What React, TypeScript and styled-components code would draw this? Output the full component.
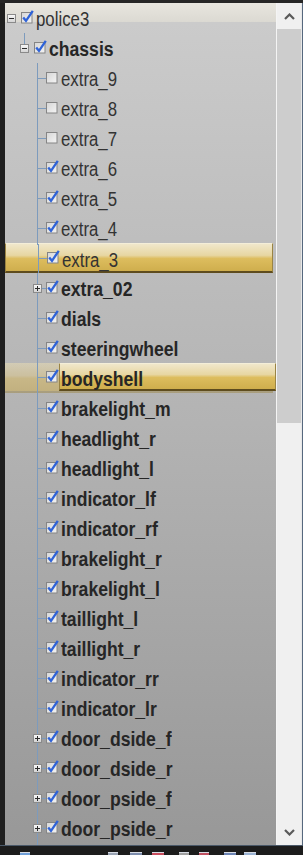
import React from 'react'
import styled, { createGlobalStyle, css } from 'styled-components'

const GlobalStyle = createGlobalStyle`
  html, body { margin: 0; padding: 0; background: #1f1f1f; }
  * { box-sizing: border-box; }
`

type Node = {
  name: string
  depth: 0 | 1 | 2
  bold?: boolean
  checked?: boolean
  expander?: 'plus' | 'minus'
  selected?: 'row' | 'label'
}

const nodes: Node[] = [
  { name: 'police3', depth: 0, checked: true, expander: 'minus' },
  { name: 'chassis', depth: 1, bold: true, checked: true, expander: 'minus' },
  { name: 'extra_9', depth: 2 },
  { name: 'extra_8', depth: 2 },
  { name: 'extra_7', depth: 2 },
  { name: 'extra_6', depth: 2, checked: true },
  { name: 'extra_5', depth: 2, checked: true },
  { name: 'extra_4', depth: 2, checked: true },
  { name: 'extra_3', depth: 2, checked: true, selected: 'row' },
  { name: 'extra_02', depth: 2, bold: true, checked: true, expander: 'plus' },
  { name: 'dials', depth: 2, bold: true, checked: true },
  { name: 'steeringwheel', depth: 2, bold: true, checked: true },
  { name: 'bodyshell', depth: 2, bold: true, checked: true, selected: 'label' },
  { name: 'brakelight_m', depth: 2, bold: true, checked: true },
  { name: 'headlight_r', depth: 2, bold: true, checked: true },
  { name: 'headlight_l', depth: 2, bold: true, checked: true },
  { name: 'indicator_lf', depth: 2, bold: true, checked: true },
  { name: 'indicator_rf', depth: 2, bold: true, checked: true },
  { name: 'brakelight_r', depth: 2, bold: true, checked: true },
  { name: 'brakelight_l', depth: 2, bold: true, checked: true },
  { name: 'taillight_l', depth: 2, bold: true, checked: true },
  { name: 'taillight_r', depth: 2, bold: true, checked: true },
  { name: 'indicator_rr', depth: 2, bold: true, checked: true },
  { name: 'indicator_lr', depth: 2, bold: true, checked: true },
  { name: 'door_dside_f', depth: 2, bold: true, checked: true, expander: 'plus' },
  { name: 'door_dside_r', depth: 2, bold: true, checked: true, expander: 'plus' },
  { name: 'door_pside_f', depth: 2, bold: true, checked: true, expander: 'plus' },
  { name: 'door_pside_r', depth: 2, bold: true, checked: true, expander: 'plus' },
]

const gold = css`
  background: linear-gradient(
    to bottom,
    #f0e7cb 0%,
    #e7d6a2 42%,
    #ddbd5e 54%,
    #cfae4d 100%
  );
  border: 1px solid #9a8444;
  border-top-color: #f4eed8;
  border-bottom: 2px solid #5e4c1e;
`

const Screen = styled.div`
  width: 303px;
  height: 855px;
  display: flex;
  flex-direction: column;
  background: #1f1f1f;
  overflow: hidden;
`

const TopBar = styled.div`
  height: 3px;
  background: #262626;
`

const Main = styled.div`
  height: 842px;
  display: flex;
`

const Gutter = styled.div`
  width: 5px;
  background: #1f1f1f;
`

const Panel = styled.div`
  flex: 1;
  overflow: hidden;
  background: linear-gradient(
    to bottom,
    #e8e6df 0px,
    #dbd9d2 19px,
    #cbcbcb 19px,
    #b3b3b3 420px,
    #989898 842px
  );
  font-family: 'Liberation Sans', Arial, sans-serif;
  font-size: 20px;
  color: #2e2e2e;
`

const Row = styled.div<{ $sel?: 'row' | 'label' }>`
  height: 30px;
  margin-right: 3px;
  display: flex;
  align-items: stretch;
  ${(p) => p.$sel === 'row' && gold}
  ${(p) =>
    p.$sel === 'label' &&
    css`
      background: linear-gradient(
        to bottom,
        rgba(232, 220, 180, 0.55) 0%,
        rgba(222, 200, 140, 0.55) 45%,
        rgba(214, 184, 96, 0.55) 55%,
        rgba(204, 172, 84, 0.55) 100%
      );
      border-bottom: 2px solid rgba(94, 76, 30, 0.35);
    `}
`

const Indent = styled.div`
  width: 13px;
  flex: none;
`

const Joint = styled.div<{ $top?: boolean; $through?: boolean; $branch?: boolean }>`
  position: relative;
  width: 13px;
  flex: none;
  display: flex;
  align-items: center;
  justify-content: center;
  &::before {
    content: '';
    position: absolute;
    left: 6px;
    width: 1px;
    top: 0;
    bottom: ${(p) => (p.$through ? '-2px' : '50%')};
    background: #7d9bbd;
    display: ${(p) => (p.$top || p.$through ? 'block' : 'none')};
  }
  &::after {
    content: '';
    position: absolute;
    left: 7px;
    right: -2px;
    top: 50%;
    height: 1px;
    background: #7d9bbd;
    display: ${(p) => (p.$branch ? 'block' : 'none')};
  }
`

const ExpanderBox = styled.svg`
  position: relative;
  z-index: 1;
  display: block;
`

const CheckBox = styled.svg<{ $gap: number }>`
  flex: none;
  align-self: center;
  margin-left: ${(p) => p.$gap}px;
  margin-top: -2px;
  display: block;
`

const Label = styled.div<{ $bold?: boolean; $sel?: boolean }>`
  margin-left: 2px;
  padding: 3px 0 0;
  line-height: 27px;
  white-space: nowrap;
  font-weight: ${(p) => (p.$bold ? 700 : 400)};
  color: ${(p) => (p.$bold ? '#262626' : '#333333')};
  ${(p) =>
    p.$sel &&
    css`
      flex: 1;
      margin-left: 0;
      margin-right: -3px;
      ${gold}
      padding-top: 2px;
      padding-left: 1px;
    `}
`

/* the tree uses a tall, condensed face */
const Narrow = styled.span<{ $bold?: boolean }>`
  display: inline-block;
  transform: scaleX(${(p) => (p.$bold ? 0.88 : 0.84)});
  transform-origin: left center;
`

const Divider = styled.div`
  width: 1px;
  background: #f4f4f4;
`

const Scrollbar = styled.div`
  width: 24px;
  display: flex;
  flex-direction: column;
  background: #f0f0f0;
`

const ArrowButton = styled.div`
  height: 26px;
  display: flex;
  align-items: center;
  justify-content: center;
  background: #f0f0f0;
`

const Thumb = styled.div`
  height: 394px;
  background: #cdcdcd;
`

const Track = styled.div`
  flex: 1;
`

const Edge = styled.div`
  width: 2px;
  background: linear-gradient(to right, #e8e8e8 0 1px, #56687e 1px);
`

const BottomLine = styled.div`
  height: 1px;
  background: #4a5868;
`

const Taskbar = styled.div`
  height: 9px;
  display: flex;
  align-items: flex-end;
  background: #1c1c1c;
  padding-left: 20px;
`

const TrayIcon = styled.div<{ $w: number; $gap: number; $tint: string }>`
  width: ${(p) => p.$w}px;
  height: 3px;
  margin-left: ${(p) => p.$gap}px;
  background: ${(p) => p.$tint};
  border-top: 1px solid #d8dce4;
`

const Expander = ({ kind }: { kind: 'plus' | 'minus' }) => (
  <ExpanderBox width="9" height="9" viewBox="0 0 9 9">
    <defs>
      <linearGradient id={`eg-${kind}`} x1="0" y1="0" x2="0" y2="1">
        <stop offset="0" stopColor="#fafafa" />
        <stop offset="1" stopColor="#d2d2d2" />
      </linearGradient>
    </defs>
    <rect x="0.5" y="0.5" width="8" height="8" fill={`url(#eg-${kind})`} stroke="#8a8a8a" />
    <path d="M2 4.5h5" stroke="#2c2c2c" />
    {kind === 'plus' && <path d="M4.5 2v5" stroke="#2c2c2c" />}
  </ExpanderBox>
)

const Check = ({ checked, gap }: { checked?: boolean; gap: number }) => (
  <CheckBox $gap={gap} width="13" height="14" viewBox="0 0 13 14">
    <defs>
      <linearGradient id="cb-fill" x1="0" y1="0" x2="1" y2="1">
        <stop offset="0" stopColor="#d6d6d6" />
        <stop offset="1" stopColor="#f4f4f4" />
      </linearGradient>
    </defs>
    <rect x="0.5" y="2.5" width="10.5" height="10.5" fill="url(#cb-fill)" stroke="#858585" />
    {checked && (
      <path
        d="M2.2 7.4 L5 10.8 L11.8 0.8"
        fill="none"
        stroke="#2f63d8"
        strokeWidth="2.3"
        strokeLinejoin="miter"
      />
    )}
  </CheckBox>
)

const TreeRow = ({ node }: { node: Node }) => {
  const { depth } = node
  return (
    <Row $sel={node.selected === 'row' ? 'row' : node.selected === 'label' ? 'label' : undefined}>
      {depth >= 1 && <Indent />}
      {depth === 2 && <Indent />}
      <Joint $top={depth === 1} $through={depth === 2} $branch={depth === 2}>
        {node.expander && <Expander kind={node.expander} />}
      </Joint>
      <Check checked={node.checked} gap={depth === 2 ? 2 : 3} />
      <Label $bold={node.bold} $sel={node.selected === 'label'}>
        <Narrow $bold={node.bold}>{node.name}</Narrow>
      </Label>
    </Row>
  )
}

const tray = [
  { w: 10, gap: 0, tint: '#6f9fd8' },
  { w: 10, gap: 78, tint: '#9aa4b4' },
  { w: 12, gap: 12, tint: '#7c8cac' },
  { w: 12, gap: 10, tint: '#c84c5c' },
  { w: 10, gap: 15, tint: '#a0a0a0' },
  { w: 10, gap: 10, tint: '#c05060' },
  { w: 12, gap: 15, tint: '#6c84b4' },
  { w: 12, gap: 8, tint: '#9cb4d4' },
]

const App: React.FC = () => (
  <>
    <GlobalStyle />
    <Screen>
      <TopBar />
      <Main>
        <Gutter />
        <Panel>
          {nodes.map((n) => (
            <TreeRow key={n.name} node={n} />
          ))}
        </Panel>
        <Divider />
        <Scrollbar>
          <ArrowButton>
            <svg width="11" height="7" viewBox="0 0 11 7">
              <path d="M1 6 L5.5 1.5 L10 6" fill="none" stroke="#5a5a5a" strokeWidth="2.2" />
            </svg>
          </ArrowButton>
          <Thumb />
          <Track />
          <ArrowButton>
            <svg width="11" height="7" viewBox="0 0 11 7">
              <path d="M1 1 L5.5 5.5 L10 1" fill="none" stroke="#5a5a5a" strokeWidth="2.2" />
            </svg>
          </ArrowButton>
        </Scrollbar>
        <Edge />
      </Main>
      <BottomLine />
      <Taskbar>
        {tray.map((t, i) => (
          <TrayIcon key={i} $w={t.w} $gap={t.gap} $tint={t.tint} />
        ))}
      </Taskbar>
    </Screen>
  </>
)

export default App
